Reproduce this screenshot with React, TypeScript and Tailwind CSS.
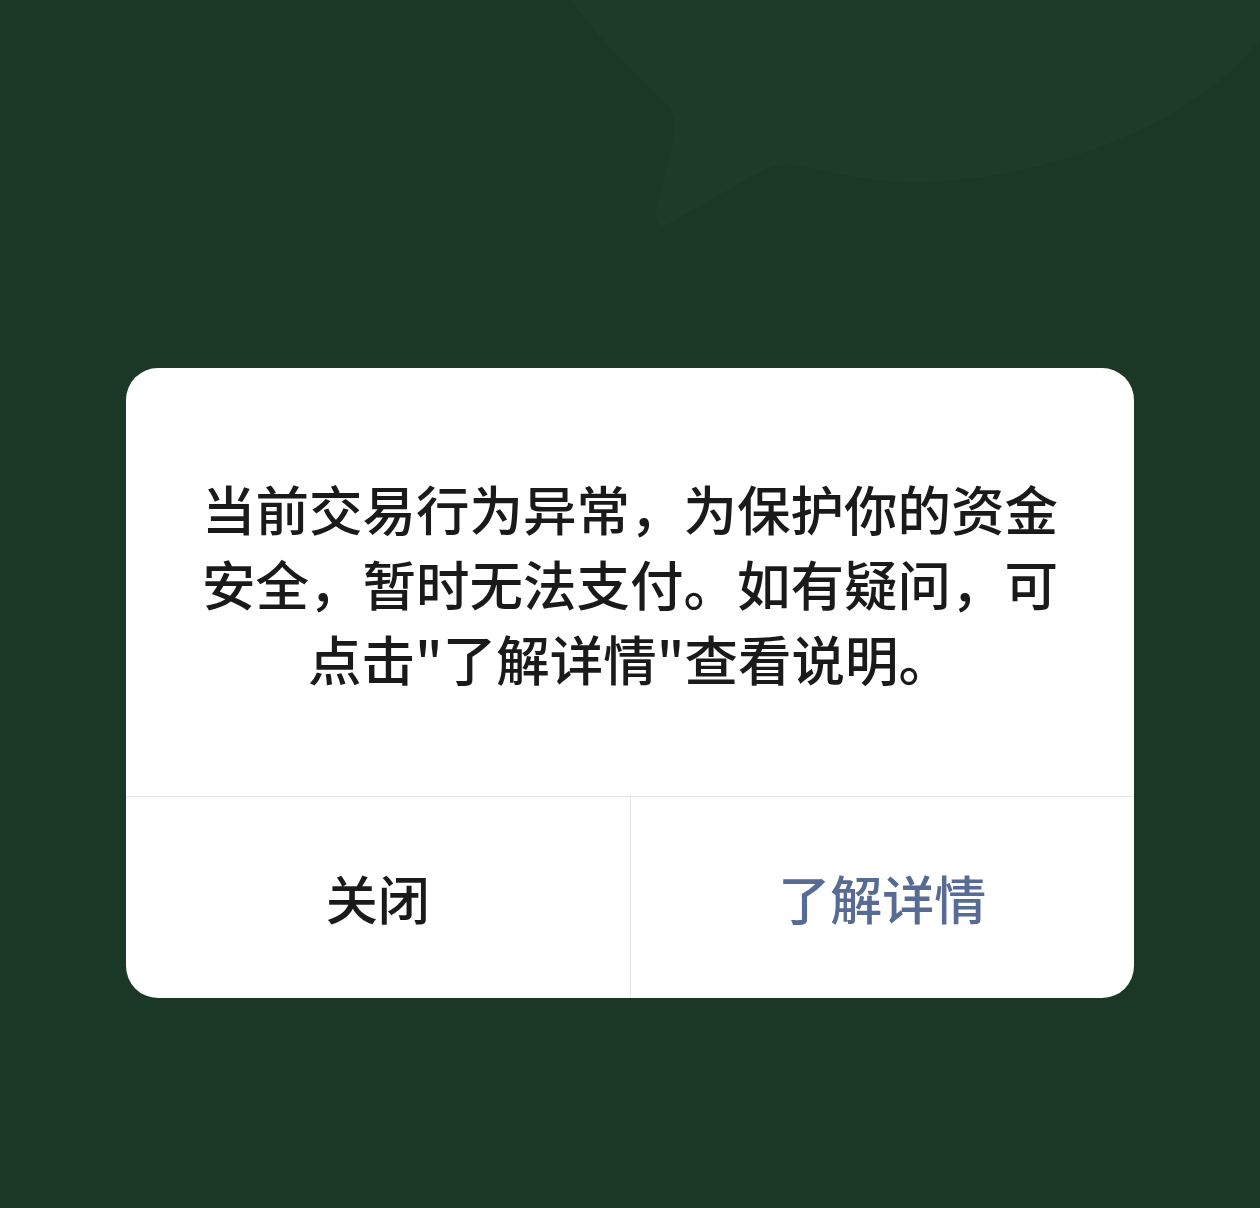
export default function App() {
  return (
    <div
      className="relative flex h-[1208px] w-[1260px] flex-col overflow-hidden bg-[#1b3725]"
      style={{ fontFamily: '"Noto Sans CJK SC", "Noto Sans", sans-serif' }}
    >
      {/* faint blob shape behind the dialog */}
      <svg className="absolute left-0 top-0" width="1260" height="260" viewBox="0 0 1260 260">
        <path
          d="M570 0 C600 40 640 80 665 103 C675 113 676 125 674 140 L656 212 C654 226 662 230 672 222 L760 172 C785 160 800 165 830 172 C900 190 1000 185 1106 145 C1180 115 1230 80 1260 40 L1260 0 Z"
          fill="#1e3a28"
        />
      </svg>

      <div className="relative mx-auto mt-[368px] w-[1008px] overflow-hidden rounded-[32px] bg-white">
        <div className="px-[76px] pb-[101px] pt-[102px] text-center text-[53.5px] font-medium leading-[75px] text-[#1a1a1a]">
          当前交易行为异常，为保护你的资金安全，暂时无法支付。如有疑问，可点击"了解详情"查看说明。
        </div>
        <div className="flex h-[202px] border-t border-[#e5e5e5]">
          <button className="flex flex-1 items-center justify-center text-[52px] font-medium text-[#1a1a1a]">
            关闭
          </button>
          <div className="w-px bg-[#e5e5e5]" />
          <button className="flex flex-1 items-center justify-center text-[52px] font-medium text-[#576b95]">
            了解详情
          </button>
        </div>
      </div>
    </div>
  );
}
